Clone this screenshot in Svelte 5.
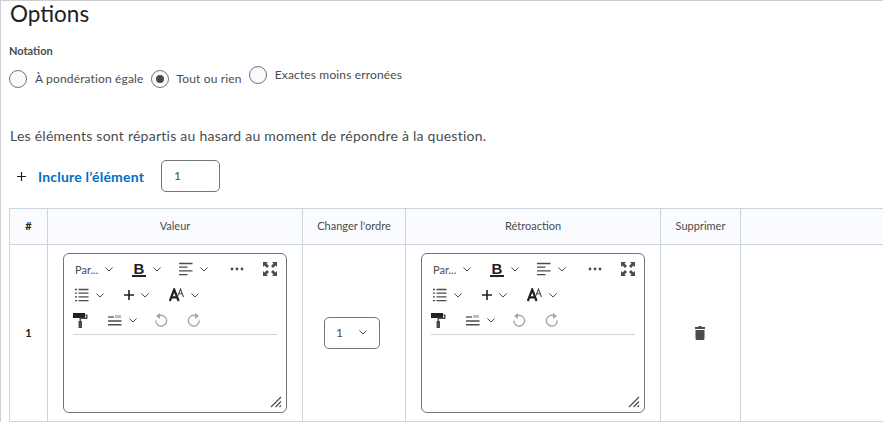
<script>
	const radios = [
		{ label: 'À pondération égale', checked: false, raised: false },
		{ label: 'Tout ou rien', checked: true, raised: false },
		{ label: 'Exactes moins erronées', checked: false, raised: true }
	];
</script>

{#snippet chevron()}
	<svg class="chev" width="8" height="5" viewBox="0 0 8 5"><path d="M0.700 0.800L4 4l3.300-3.200" fill="none" stroke="#494c4e" stroke-width="1" stroke-linecap="round" stroke-linejoin="round" /></svg>
{/snippet}

{#snippet editor()}
	<div class="editor">
		<div class="tools">
			<div class="tool w57"><span class="para">Par...</span>{@render chevron()}</div>
			<div class="tool w47">
				<span class="bold">B</span>
				{@render chevron()}
			</div>
			<div class="tool w51">
				<svg width="14" height="14" viewBox="0 0 14 14"><path d="M0 1.500h13.500M0 5.200h8.500M0 8.900h13.500M0 12.600h8.500" stroke="#494c4e" stroke-width="1.300" /></svg>
				{@render chevron()}
			</div>
			<div class="tool w33">
				<svg width="14" height="4" viewBox="0 0 14 4"><circle cx="2" cy="2" r="1.400" fill="#494c4e" /><circle cx="7" cy="2" r="1.400" fill="#494c4e" /><circle cx="12" cy="2" r="1.400" fill="#494c4e" /></svg>
			</div>
			<div class="tool">
				<svg width="14" height="14" viewBox="0 0 14 14" fill="#494c4e"><path d="M0 0h5L3.500 1.500 6 4 4 6 1.500 3.500 0 5zM14 0v5l-1.500-1.500L10 6 8 4l2.500-2.500L9 0zM0 14V9l1.500 1.500L4 8l2 2-2.500 2.500L5 14zM14 14H9l1.500-1.500L8 10l2-2 2.500 2.500L14 9z" /></svg>
			</div>
		</div>
		<div class="tools">
			<div class="tool w49">
				<svg width="14" height="14" viewBox="0 0 14 14"><path d="M3.500 1.500h10M3.500 5.200h10M3.500 8.900h10M3.500 12.600h10" stroke="#494c4e" stroke-width="1.300" /><path d="M0 1.500h2M0 5.200h2M0 8.900h2M0 12.600h2" stroke="#494c4e" stroke-width="1.300" /></svg>
				{@render chevron()}
			</div>
			<div class="tool w45">
				<svg width="10" height="10" viewBox="0 0 10 10"><path d="M5 0v10M0 5h10" stroke="#202122" stroke-width="1.600" /></svg>
				{@render chevron()}
			</div>
			<div class="tool">
				<svg width="15" height="14" viewBox="0 0 15 14"><path d="M0.800 13L5.200 1.500 9.600 13M2.400 9.300h5.600" fill="none" stroke="#202122" stroke-width="2.200" /><path d="M9 7.500L11.500 1 14.500 9M10 5.700h3.500" fill="none" stroke="#494c4e" stroke-width="1.100" /></svg>
				{@render chevron()}
			</div>
		</div>
		<div class="tools last">
			<div class="tool w35">
				<svg width="15" height="15" viewBox="0 0 15 15"><path d="M0 0h12v5H0z" fill="#202122" /><path d="M12 1.500h2.500v4.500H8V8H9v7H5.500V8h1V4.500h6.500V2.500H12z" fill="#494c4e" /></svg>
			</div>
			<div class="tool w47">
				<svg width="14" height="12" viewBox="0 0 14 12"><path d="M0 3h6" stroke="#494c4e" stroke-width="1.300" /><path d="M8 1v3M10 1v3M12 1v3" stroke="#7c7f81" stroke-width="1" /><path d="M0 7h13.500M0 10.700h13.500" stroke="#494c4e" stroke-width="1.500" /></svg>
				{@render chevron()}
			</div>
			<div class="tool w32">
				<svg width="13" height="14" viewBox="0 0 13 14"><path d="M3.500 3a5.400 5.400 0 1 1-2.700 4.500" fill="none" stroke="#a3a6a8" stroke-width="1.400" /><path d="M1 3L5 0v6z" fill="#a3a6a8" /></svg>
			</div>
			<div class="tool">
				<svg width="13" height="14" viewBox="0 0 13 14"><path d="M9.500 3a5.400 5.400 0 1 0 2.700 4.500" fill="none" stroke="#a3a6a8" stroke-width="1.400" /><path d="M12 3L8 0v6z" fill="#a3a6a8" /></svg>
			</div>
		</div>
		<svg class="grip" width="12" height="12" viewBox="0 0 12 12"><path d="M1 11L11 1M5.500 11L11 5.500M9.500 11L11 9.500" stroke="#494c4e" stroke-width="1.200" /></svg>
	</div>
{/snippet}

<div class="page">
	<h1>Options</h1>
	<div class="field-label">Notation</div>
	<div class="radios">
		{#each radios as radio}
			<label class="radio" class:raised={radio.raised}>
				<span class="circle" class:checked={radio.checked}></span>
				<span>{radio.label}</span>
			</label>
		{/each}
	</div>

	<p class="hint">Les éléments sont répartis au hasard au moment de répondre à la question.</p>

	<div class="add-row">
		<svg width="9" height="9" viewBox="0 0 9 9"><path d="M4.500 0v9M0 4.500h9" stroke="#202122" stroke-width="1.200" /></svg>
		<span class="add-link">Inclure l’élément</span>
		<div class="count">1</div>
	</div>

	<div class="grid">
		<div class="cell head hash">#</div>
		<div class="cell head">Valeur</div>
		<div class="cell head">Changer l'ordre</div>
		<div class="cell head">Rétroaction</div>
		<div class="cell head">Supprimer</div>
		<div class="cell head end"></div>

		<div class="cell num">1</div>
		<div class="cell">{@render editor()}</div>
		<div class="cell">
			<div class="select"><span>1</span>{@render chevron()}</div>
		</div>
		<div class="cell">{@render editor()}</div>
		<div class="cell">
			<svg class="trash" width="10" height="14" viewBox="0 0 10 14" fill="#494c4e"><path d="M3.500 0h3v1H10v2H0V1h3.500z" /><path d="M0.500 4h9v8.500a1.500 1.500 0 0 1-1.500 1.500H2a1.500 1.500 0 0 1-1.500-1.500z" /></svg>
		</div>
		<div class="cell end"></div>
	</div>
</div>

<style>
	:global(body) {
		margin: 0;
		background: #fff;
	}

	.page {
		box-sizing: border-box;
		width: 883px;
		height: 422px;
		overflow: hidden;
		border-top: 1px solid #cdcfd1;
		border-left: 1px solid #cdcfd1;
		padding-left: 8px;
		font-family: Lato, sans-serif;
		color: #494c4e;
	}

	h1 {
		margin: 0 0 0 1px;
		font-size: 22.500px;
		font-weight: 400;
		line-height: 26px;
		color: #202122;
	}

	.field-label {
		margin-top: 17px;
		font-size: 11px;
		font-weight: 700;
		line-height: 13px;
		color: #494c4e;
	}

	.radios {
		display: flex;
		align-items: flex-start;
		gap: 7px;
		margin-top: 9px;
		height: 37px;
	}

	.radio {
		display: flex;
		align-items: center;
		gap: 8px;
		margin-top: 4px;
		font-size: 12px;
		letter-spacing: 0.150px;
		line-height: 18px;
	}

	.radio.raised {
		margin-top: 0;
	}

	.circle {
		box-sizing: border-box;
		position: relative;
		width: 18px;
		height: 18px;
		border: 1px solid #6e7477;
		border-radius: 50%;
		background: #f9fbff;
	}

	.circle.checked::after {
		content: '';
		position: absolute;
		top: 4px;
		left: 4px;
		width: 8px;
		height: 8px;
		border-radius: 50%;
		background: #494c4e;
	}

	.hint {
		margin: 24px 0 0 1px;
		font-size: 14px;
		line-height: 17px;
		letter-spacing: 0.250px;
		color: #494c4e;
	}

	.add-row {
		display: flex;
		align-items: center;
		margin-top: 16px;
		padding-left: 8px;
	}

	.add-link {
		margin-left: 12px;
		font-size: 14px;
		font-weight: 700;
		letter-spacing: 0.200px;
		color: #006fbf;
	}

	.count {
		box-sizing: border-box;
		width: 59px;
		height: 32px;
		margin-left: 17px;
		padding: 7px 0 0 12px;
		border: 1px solid #6e7477;
		border-radius: 5px;
		font-size: 12px;
		line-height: 16px;
		color: #494c4e;
	}

	.grid {
		display: grid;
		grid-template-columns: 38px 255px 103px 255px 80px 200px;
		grid-template-rows: 36px 177px;
		width: 931px;
		margin-top: 16px;
		border-top: 1px solid #cdd5dc;
		border-left: 1px solid #cdd5dc;
	}

	.cell {
		box-sizing: border-box;
		display: flex;
		align-items: center;
		justify-content: center;
		border-right: 1px solid #cdd5dc;
		border-bottom: 1px solid #cdd5dc;
	}

	.head {
		padding-bottom: 3px;
		background: #f9fbff;
		font-size: 11px;
		color: #494c4e;
	}

	.hash,
	.num {
		font-size: 11px;
		font-weight: 700;
		color: #202122;
	}

	.num {
		padding-bottom: 2px;
	}

	.editor {
		box-sizing: border-box;
		position: relative;
		width: 224px;
		height: 160px;
		padding: 2px 9px 0;
		border: 1px solid #6e7477;
		border-radius: 6px;
		align-self: flex-start;
		margin-top: 8px;
	}

	.tools {
		display: flex;
		align-items: center;
		height: 26px;
		padding-left: 2px;
	}

	.tools.last {
		height: 24px;
		padding-left: 0;
		padding-bottom: 2px;
		border-bottom: 1px solid #cdd5dc;
	}

	.tool {
		display: flex;
		flex-shrink: 0;
		align-items: center;
		gap: 7px;
	}

	.w32 { width: 32px; }
	.w33 { width: 33px; }
	.w35 { width: 35px; }
	.w45 { width: 45px; }
	.w47 { width: 47px; }
	.w49 { width: 49px; }
	.w51 { width: 51px; }
	.w57 { width: 57px; }

	.para {
		font-size: 11px;
		color: #494c4e;
	}

	.bold {
		box-sizing: border-box;
		width: 14px;
		height: 15px;
		border-bottom: 2px solid #202122;
		font-family: 'Liberation Sans', sans-serif;
		font-size: 15px;
		font-weight: 700;
		line-height: 13px;
		text-align: center;
		color: #202122;
	}

	.grip {
		position: absolute;
		right: 4px;
		bottom: 4px;
	}

	.select {
		box-sizing: border-box;
		display: flex;
		align-items: center;
		justify-content: space-between;
		width: 56px;
		height: 32px;
		margin: 0 4px 1px 0;
		padding: 0 12px 0 11px;
		border: 1px solid #6e7477;
		border-radius: 5px;
		font-size: 12px;
		color: #494c4e;
	}

	.trash {
		margin-right: 2px;
	}
</style>
